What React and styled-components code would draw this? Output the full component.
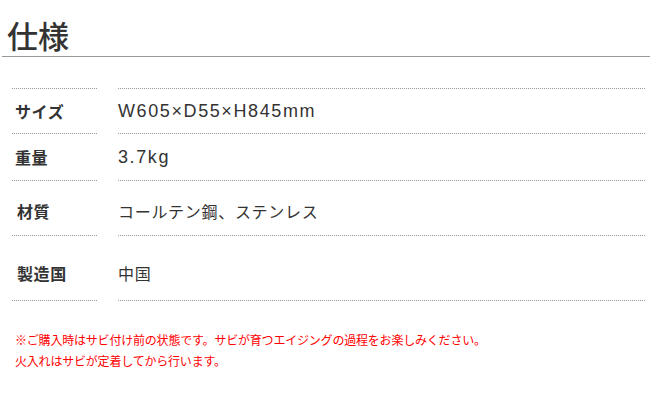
import React from "react";
import styled, { createGlobalStyle } from "styled-components";

const GlobalStyle = createGlobalStyle`
  html, body {
    margin: 0;
    padding: 0;
    background: #fff;
  }
  body {
    font-family: "Noto Sans CJK JP", "Liberation Sans", sans-serif;
    color: #333;
  }
`;

const Page = styled.div`
  width: 650px;
  height: 414px;
  overflow: hidden;
`;

const Title = styled.h2`
  margin: 0 0 0 2px;
  padding: 18px 0 4px 5px;
  font-size: 31px;
  line-height: 34px;
  font-weight: 500;
  color: #333;
  border-bottom: 1px solid #999;
`;

const SpecList = styled.div`
  margin-top: 31px;
  padding: 0 5px 0 12px;
`;

const Row = styled.div`
  display: grid;
  grid-template-columns: 85px 1fr;
  column-gap: 21px;
  height: ${(p) => p.$height}px;
`;

const Cell = styled.div`
  display: flex;
  align-items: center;
  padding-top: ${(p) => p.$shift || 0}px;
  border-top: 1px dotted #999;
  border-bottom: ${(p) => (p.$last ? "1px dotted #999" : "none")};
`;

const Label = styled(Cell)`
  padding-left: ${(p) => p.$indent || 3}px;
  font-size: 16px;
  font-weight: bold;
  letter-spacing: 0.6px;
  color: #333;
`;

const Value = styled(Cell)`
  font-family: ${(p) =>
    p.$latin
      ? '"Liberation Sans", "Noto Sans CJK JP", sans-serif'
      : '"Noto Sans CJK JP", sans-serif'};
  font-size: ${(p) => (p.$latin ? 18 : 16)}px;
  letter-spacing: ${(p) => (p.$latin ? 1.6 : 0.7)}px;
  color: #333;
`;

const Notes = styled.div`
  margin-top: 28px;
  padding-left: 15px;
  font-size: 12px;
  line-height: 21px;
  letter-spacing: -0.2px;
  color: #f00;
`;

const specs = [
  { label: "サイズ", value: "W605×D55×H845mm", height: 45, latin: true },
  { label: "重量", value: "3.7kg", height: 47, latin: true },
  { label: "材質", value: "コールテン鋼、ステンレス", height: 55, shift: 5, indent: 5 },
  { label: "製造国", value: "中国", height: 66, shift: 10, indent: 5 },
];

const App = () => {
  return (
    <Page>
      <GlobalStyle />
      <Title>仕様</Title>
      <SpecList>
        {specs.map((s, i) => {
          const last = i === specs.length - 1;
          return (
            <Row key={s.label} $height={s.height}>
              <Label $shift={s.shift} $indent={s.indent} $last={last}>
                {s.label}
              </Label>
              <Value $shift={s.shift} $last={last} $latin={s.latin}>
                {s.value}
              </Value>
            </Row>
          );
        })}
      </SpecList>
      <Notes>
        ※ご購入時はサビ付け前の状態です。サビが育つエイジングの過程をお楽しみください。
        <br />
        火入れはサビが定着してから行います。
      </Notes>
    </Page>
  );
};

export default App;
